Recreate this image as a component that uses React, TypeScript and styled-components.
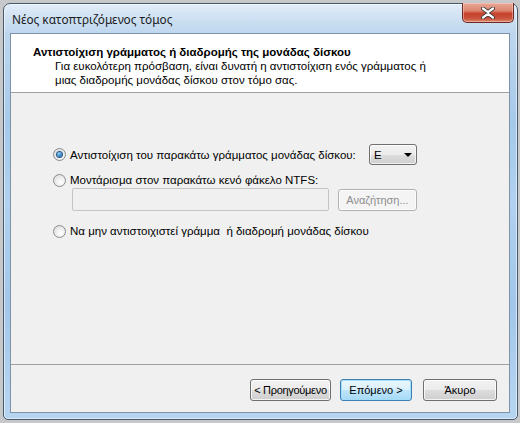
import React from 'react';
import styled, { createGlobalStyle } from 'styled-components';

const Global = createGlobalStyle`
  html, body { margin: 0; padding: 0; }
  body {
    width: 520px;
    height: 423px;
    overflow: hidden;
    background: #c6c8ca;
    font-family: "Liberation Sans", Arial, sans-serif;
    font-size: 11px;
    color: #000;
  }
  #root { width: 520px; height: 423px; }
`;

const Page = styled.div`
  padding: 3px 0 0 3px;
`;

const Window = styled.div`
  box-sizing: border-box;
  width: 515px;
  height: 417px;
  border: 1px solid #47596c;
  border-radius: 7px 7px 5px 5px;
  background: linear-gradient(180deg, #e2edf8 0px, #cfe1f3 14px, #bdd6ee 30px, #a6c9ea 120px, #b0d1ef 200px, #a3c6e9 300px, #b4d4f0 400px);
  display: flex;
  flex-direction: column;
  padding: 0 7px 6px 6px;
  box-shadow: inset 0 0 0 1px rgba(255, 255, 255, 0.55);
`;

const TitleBar = styled.div`
  height: 29px;
  display: flex;
  align-items: center;
  justify-content: space-between;
`;

const Title = styled.span`
  font-family: "Noto Sans", "Open Sans", sans-serif;
  font-size: 11.8px;
  color: #1b1b1b;
  padding-left: 2px;
  margin-top: 1px;
`;

const CloseButton = styled.div`
  align-self: flex-start;
  margin: -1px -4px 0 0;
  box-sizing: border-box;
  width: 52px;
  height: 20px;
  border: 1px solid #6e2a22;
  border-top: none;
  border-radius: 0 0 5px 5px;
  background: linear-gradient(180deg, #e9a898 0%, #dd8672 40%, #c6432d 55%, #c8503a 80%, #dc8a6e 100%);
  box-shadow: inset 0 0 0 1px rgba(255, 220, 210, 0.45);
  display: flex;
  align-items: center;
  justify-content: center;
`;

const Client = styled.div`
  flex: 1;
  display: flex;
  flex-direction: column;
  border: 1px solid #7f93a8;
  background: #f0f0f0;
`;

const Header = styled.div`
  box-sizing: border-box;
  height: 59px;
  background: #ffffff;
  border-bottom: 1px solid #a0a0a0;
  padding: 11px 0 0 22px;
  line-height: 14px;
  font-size: 11.5px;
`;

const HeaderTitle = styled.div`
  font-weight: bold;
`;

const HeaderText = styled.div`
  padding-left: 22px;
`;

const Body = styled.div`
  flex: 1;
  padding: 51px 0 0 42px;
  display: flex;
  flex-direction: column;
  width: 364px;
`;

const OptionRow = styled.div<{ $gap: number; $height?: number }>`
  display: flex;
  align-items: center;
  justify-content: space-between;
  margin-top: ${(p) => p.$gap}px;
  height: ${(p) => p.$height ?? 14}px;
`;

const RadioLabel = styled.label`
  display: flex;
  align-items: center;
  gap: 4px;
  line-height: 14px;
  white-space: nowrap;
  font-size: 11.5px;
`;

const Radio = styled.span<{ $checked?: boolean }>`
  box-sizing: border-box;
  width: 13px;
  height: 13px;
  border-radius: 50%;
  border: 1px solid #8a8c8e;
  background: radial-gradient(circle at 60% 65%, #ffffff 0%, #f0f0f0 40%, #d2d4d6 100%);
  display: flex;
  align-items: center;
  justify-content: center;
  &::after {
    content: '';
    width: 5px;
    height: 5px;
    border-radius: 50%;
    display: ${(p) => (p.$checked ? 'block' : 'none')};
    background: radial-gradient(circle at 40% 35%, #9fd5f7 0%, #3d8fd0 45%, #0f4a8a 100%);
    box-shadow: 0 0 0 1px #2a5a86;
  }
`;

const Combo = styled.div`
  box-sizing: border-box;
  width: 48px;
  height: 21px;
  border: 1px solid #707070;
  border-radius: 3px;
  background: linear-gradient(180deg, #f3f3f3 0%, #ebebeb 50%, #dddddd 51%, #cfcfcf 100%);
  box-shadow: inset 0 0 0 1px rgba(255, 255, 255, 0.7);
  display: flex;
  align-items: center;
  justify-content: space-between;
  padding: 0 4px 0 4px;
  font-size: 11.5px;
`;

const Arrow = styled.span`
  width: 0;
  height: 0;
  border-left: 4px solid transparent;
  border-right: 4px solid transparent;
  border-top: 4px solid #000;
  margin-top: 1px;
`;

const FolderRow = styled.div`
  display: flex;
  align-items: center;
  gap: 9px;
  margin: 1px 0 0 19px;
  height: 23px;
`;

const PathField = styled.div`
  flex: 1;
  box-sizing: border-box;
  height: 23px;
  border: 1px solid #c2c4c6;
  border-radius: 2px;
  background: #f0f0f0;
`;

const Button = styled.div<{ $width: number; $default?: boolean; $disabled?: boolean }>`
  box-sizing: border-box;
  width: ${(p) => p.$width}px;
  height: 22px;
  border-radius: 3px;
  border: 1px solid ${(p) => (p.$disabled ? '#adb2b5' : p.$default ? '#3c7fb1' : '#707070')};
  background: ${(p) =>
    p.$disabled
      ? '#f4f4f4'
      : p.$default
      ? 'linear-gradient(180deg, #eaf6fd 0%, #d9f0fc 50%, #bee6fd 51%, #a7d9f5 100%)'
      : 'linear-gradient(180deg, #f2f2f2 0%, #ebebeb 50%, #dddddd 51%, #cfcfcf 100%)'};
  box-shadow: inset 0 0 0 1px ${(p) => (p.$default ? 'rgba(160,220,250,0.9)' : 'rgba(255,255,255,0.75)')};
  color: ${(p) => (p.$disabled ? '#8d8d8d' : '#000')};
  display: flex;
  align-items: center;
  justify-content: center;
  white-space: nowrap;
  letter-spacing: ${(p) => (p.$width > 80 ? '-0.3px' : '0')};
`;

const Footer = styled.div`
  box-sizing: border-box;
  height: 48px;
  border-top: 1px solid #a0a0a0;
  display: flex;
  justify-content: flex-end;
  align-items: flex-start;
  padding: 14px 12px 0 0;
`;

const ButtonGap = styled.span<{ $w: number }>`
  width: ${(p) => p.$w}px;
`;

export default function App() {
  return (
    <>
      <Global />
      <Page>
        <Window>
          <TitleBar>
            <Title>Νέος κατοπτριζόμενος τόμος</Title>
            <CloseButton>
              <svg width="14" height="12" viewBox="0 0 14 12">
                <path
                  d="M2 1.5 L7 5.2 L12 1.5 M2 10.5 L7 6.8 L12 10.5"
                  stroke="#3a3a3a"
                  strokeWidth="4"
                  fill="none"
                  strokeLinecap="round"
                />
                <path
                  d="M2 1.5 L7 5.2 L12 1.5 M2 10.5 L7 6.8 L12 10.5"
                  stroke="#ffffff"
                  strokeWidth="2.2"
                  fill="none"
                  strokeLinecap="round"
                />
              </svg>
            </CloseButton>
          </TitleBar>
          <Client>
            <Header>
              <HeaderTitle>Αντιστοίχιση γράμματος ή διαδρομής της μονάδας δίσκου</HeaderTitle>
              <HeaderText>Για ευκολότερη πρόσβαση, είναι δυνατή η αντιστοίχιση ενός γράμματος ή</HeaderText>
              <HeaderText>μιας διαδρομής μονάδας δίσκου στον τόμο σας.</HeaderText>
            </Header>
            <Body>
              <OptionRow $gap={0} $height={21}>
                <RadioLabel>
                  <Radio $checked />
                  Αντιστοίχιση του παρακάτω γράμματος μονάδας δίσκου:
                </RadioLabel>
                <Combo>
                  <span>E</span>
                  <Arrow />
                </Combo>
              </OptionRow>
              <OptionRow $gap={8}>
                <RadioLabel>
                  <Radio />
                  Μοντάρισμα στον παρακάτω κενό φάκελο NTFS:
                </RadioLabel>
              </OptionRow>
              <FolderRow>
                <PathField />
                <Button $width={79} $disabled>
                  Αναζήτηση...
                </Button>
              </FolderRow>
              <OptionRow $gap={13}>
                <RadioLabel>
                  <Radio />
                  Να μην αντιστοιχιστεί γράμμα&nbsp; ή διαδρομή μονάδας δίσκου
                </RadioLabel>
              </OptionRow>
            </Body>
            <Footer>
              <Button $width={81}>&lt; Προηγούμενο</Button>
              <ButtonGap $w={9} />
              <Button $width={72} $default>
                Επόμενο &gt;
              </Button>
              <ButtonGap $w={11} />
              <Button $width={74}>Άκυρο</Button>
            </Footer>
          </Client>
        </Window>
      </Page>
    </>
  );
}
